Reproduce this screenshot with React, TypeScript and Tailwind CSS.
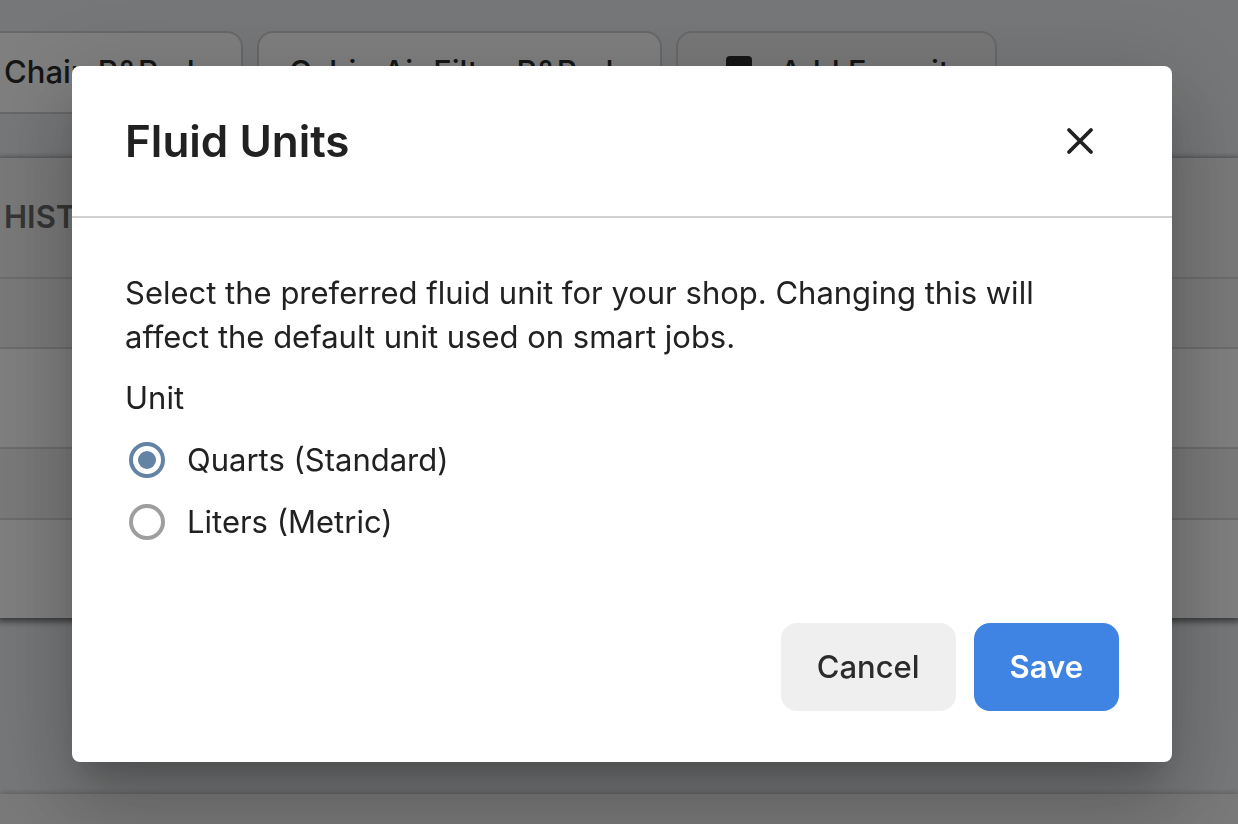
import { useState } from "react";

const FAVORITES = ["Chain R&Rade", "Cabin Air Filter R&Rade"];

const ROWS = [
  { id: 1, className: "h-[70px] bg-[#f3f3f3]" },
  { id: 2, className: "h-[100px] bg-white" },
  { id: 3, className: "h-[71px] bg-[#f3f3f3]" },
  { id: 4, className: "h-[100px] bg-white" },
];

const UNITS = [
  { value: "quarts", label: "Quarts (Standard)" },
  { value: "liters", label: "Liters (Metric)" },
];

function BookmarkAddIcon() {
  return (
    <svg viewBox="0 0 26 34" className="h-[34px] w-[26px] shrink-0" aria-hidden="true">
      <path d="M4 0h18a4 4 0 0 1 4 4v30l-13-6-13 6V4a4 4 0 0 1 4-4z" fill="currentColor" />
    </svg>
  );
}

function CloseIcon() {
  return (
    <svg viewBox="0 0 28 28" className="size-7" aria-hidden="true">
      <path d="M3 3l22 22M25 3L3 25" stroke="currentColor" strokeWidth="3.8" strokeLinecap="round" fill="none" />
    </svg>
  );
}

function JobsPage() {
  return (
    <div className="flex min-h-screen flex-col overflow-hidden bg-[#eceff1] pt-[31px]">
      {/* Favorites */}
      <div className="flex gap-[14px] text-[31px] font-medium whitespace-nowrap text-[#2b2b2b]">
        {FAVORITES.map((name) => (
          <button
            key={name}
            type="button"
            className="h-[83px] shrink-0 rounded-2xl border-2 border-[#d0d0d0] bg-white pr-7 pl-[30px] first:-ml-7"
          >
            {name}
          </button>
        ))}
        <button
          type="button"
          className="flex h-[83px] shrink-0 items-center gap-7 rounded-2xl border-2 border-[#d0d0d0] bg-[#f0f0f0] pr-7 pl-12"
        >
          <BookmarkAddIcon />
          Add Favorite
        </button>
      </div>

      {/* History */}
      <section className="mt-11 bg-white shadow-[0_2px_6px_2px_rgba(0,0,0,0.5)]">
        <h2 className="flex h-[119px] items-center bg-[#f3f3f3] pl-1 text-[31px] font-semibold text-[#6b6b6b]">
          HISTORY
        </h2>
        {ROWS.map((row) => (
          <div key={row.id} className={`border-t-2 border-[#d8d8d8] ${row.className}`} />
        ))}
      </section>

      <footer className="mt-auto h-[30px] bg-[#f3f3f3] shadow-[0_0_6px_rgba(0,0,0,0.3)]" />
    </div>
  );
}

function FluidUnitsDialog() {
  const [unit, setUnit] = useState("quarts");

  return (
    <div className="fixed inset-0 flex items-start bg-black/50 pt-[66px] pr-[66px] pl-[72px]">
      <div
        role="dialog"
        aria-modal="true"
        aria-labelledby="fluid-units-title"
        className="w-full rounded-lg bg-white text-[#212121] shadow-[0_22px_30px_-14px_rgba(0,0,0,0.2),0_48px_76px_6px_rgba(0,0,0,0.14),0_18px_92px_16px_rgba(0,0,0,0.12)]"
      >
        <header className="flex h-[152px] items-center justify-between border-b-2 border-[#d0d0d0] pr-[78px] pl-[53px]">
          <h1 id="fluid-units-title" className="text-[44px] font-semibold">
            Fluid Units
          </h1>
          <button type="button" aria-label="Close">
            <CloseIcon />
          </button>
        </header>

        <div className="px-[53px] pt-[53px] text-[31px] leading-[44px]">
          <p>
            Select the preferred fluid unit for your shop. Changing this will affect the default unit used on smart
            jobs.
          </p>
          <fieldset className="mt-[17px]">
            <legend>Unit</legend>
            <div className="mt-[18px] flex flex-col gap-[18px]">
              {UNITS.map((item) => (
                <label key={item.value} className="flex items-center gap-[22px] pl-1">
                  <input
                    type="radio"
                    name="unit"
                    value={item.value}
                    checked={unit === item.value}
                    onChange={() => setUnit(item.value)}
                    className="grid size-9 shrink-0 appearance-none place-items-center rounded-full border-4 border-[#9e9e9e] checked:border-[#6283a3] checked:before:size-[18px] checked:before:rounded-full checked:before:bg-[#6283a3]"
                  />
                  {item.label}
                </label>
              ))}
            </div>
          </fieldset>
        </div>

        <div className="flex justify-end gap-[18px] px-[53px] pt-[79px] pb-[51px] text-[31px]">
          <button type="button" className="h-[88px] rounded-2xl bg-[#efefef] px-9 font-medium text-[#2b2b2b]">
            Cancel
          </button>
          <button type="button" className="h-[88px] rounded-2xl bg-[#3f84e2] px-9 font-semibold text-white">
            Save
          </button>
        </div>
      </div>
    </div>
  );
}

export default function App() {
  return (
    <div className="font-[Inter,sans-serif]">
      <JobsPage />
      <FluidUnitsDialog />
    </div>
  );
}
